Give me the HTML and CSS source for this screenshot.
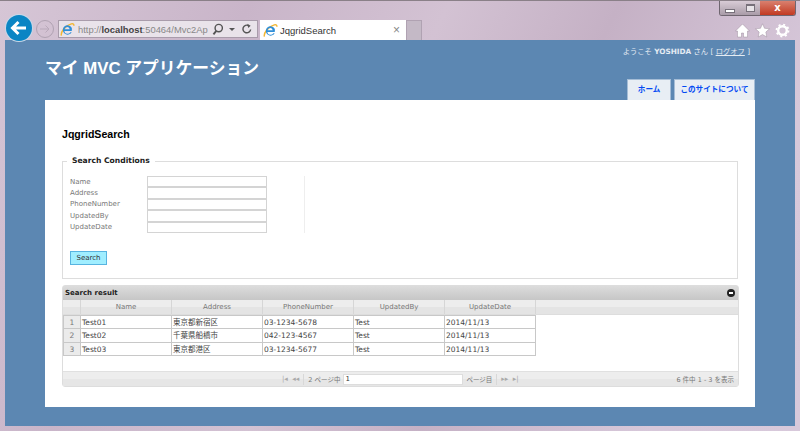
FILE: index.html
```html
<!DOCTYPE html>
<html lang="ja">
<head>
    <meta charset="UTF-8">
    <title>JqgridSearch</title>
    <link rel="stylesheet" href="styles.css">
</head>
<body>
    <svg class="defs" width="0" height="0">
        <symbol id="ie" viewBox="0 0 16 16">
            <path d="M1.5 14.5C.5 11 5 4 12 2c2-.6 3.2.2 2.6 2" fill="none" stroke="#f2b632" stroke-width="1.5"/>
            <path d="M12.5 9.6H4.6a3.4 3.4 0 0 0 6.4 1.2h1.5a5 5 0 1 1 0-4.6c.3.9.2 2.3 0 3.4zM4.8 7.6h5.6a2.9 2.9 0 0 0-5.6 0z" fill="#2f8fd8" fill-rule="evenodd"/>
        </symbol>
    </svg>

    <!-- Browserfenster -->
    <div class="window">
        <div class="window-controls">
            <span class="control"><span class="min-icon"></span></span>
            <span class="control"><span class="max-icon"></span></span>
            <span class="control close">x</span>
        </div>

        <div class="chrome">
            <div class="back-btn">
                <svg width="18" height="16" viewBox="0 0 18 16"><path d="M16 8H3M8.500 2 2.500 8l6 6" fill="none" stroke="#fff" stroke-width="3"/></svg>
            </div>
            <div class="forward-btn">
                <svg width="12" height="10" viewBox="0 0 12 10"><path d="M1 5h9M6.500 1.500 10 5 6.500 8.500" fill="none" stroke="#b9a9ba" stroke-width="1"/></svg>
            </div>
            <div class="address-bar">
                <svg class="ie-icon" width="15" height="15"><use href="#ie"/></svg>
                <span class="url">http://<b>localhost</b>:50464/Mvc2Ap</span>
                <svg width="12" height="13" viewBox="0 0 12 13"><circle cx="7" cy="5" r="3.800" fill="none" stroke="#555" stroke-width="1.500"/><path d="M4.500 8 1.500 11.500" stroke="#555" stroke-width="2"/></svg>
                <span class="arrow-down"></span>
                <svg width="12" height="12" viewBox="0 0 12 12"><path d="M10 6.500A4 4 0 1 1 8 2.500" fill="none" stroke="#555" stroke-width="1.500"/><path d="M6.500 .5 10 2.500 7.500 5z" fill="#555"/></svg>
            </div>
            <div class="tab">
                <svg class="ie-icon" width="15" height="15"><use href="#ie"/></svg>
                <span class="tab-title">JqgridSearch</span>
                <span class="tab-close">×</span>
            </div>
            <div class="new-tab"></div>
            <div class="toolbar">
                <svg width="15" height="15" viewBox="0 0 15 15"><path d="M7.500 1 .5 8h2v6h4V10h2v4h4V8h2z" fill="#fff" stroke="#8d7f8d" stroke-width=".4"/></svg>
                <svg width="15" height="15" viewBox="0 0 15 15"><path d="m7.500 .8 2 4.500 5 .5-3.700 3.300 1 4.900-4.300-2.500-4.300 2.500 1-4.900L.5 5.800l5-.5z" fill="#fff" stroke="#8d7f8d" stroke-width=".4"/></svg>
                <svg width="15" height="15" viewBox="0 0 15 15"><circle cx="7.500" cy="7.500" r="4.300" fill="none" stroke="#fff" stroke-width="2.400"/><circle cx="7.500" cy="7.500" r="6" fill="none" stroke="#fff" stroke-width="1.800" stroke-dasharray="2 2.700"/></svg>
            </div>
        </div>

        <!-- Seite -->
        <div class="page">
            <header class="page-header">
                <h1>マイ MVC アプリケーション</h1>
                <div class="header-right">
                    <div class="login">ようこそ <b>YOSHIDA</b> さん [ <a href="#">ログオフ</a> ]</div>
                    <nav class="menu">
                        <a href="#">ホーム</a>
                        <a href="#">このサイトについて</a>
                    </nav>
                </div>
            </header>

            <main class="main">
                <h2>JqgridSearch</h2>

                <fieldset class="conditions">
                    <legend>Search Conditions</legend>
                    <div class="form-rows">
                        <div class="form-row"><label>Name</label><input type="text"></div>
                        <div class="form-row"><label>Address</label><input type="text"></div>
                        <div class="form-row"><label>PhoneNumber</label><input type="text"></div>
                        <div class="form-row"><label>UpdatedBy</label><input type="text"></div>
                        <div class="form-row"><label>UpdateDate</label><input type="text"></div>
                    </div>
                    <button class="search-button">Search</button>
                </fieldset>

                <div class="grid">
                    <div class="grid-title">
                        <span>Search result</span>
                        <span class="collapse"></span>
                    </div>
                    <div class="grid-head">
                        <div class="rn"></div>
                        <div>Name</div>
                        <div>Address</div>
                        <div>PhoneNumber</div>
                        <div>UpdatedBy</div>
                        <div>UpdateDate</div>
                    </div>
                    <div class="grid-body">
                        <div class="grid-row">
                            <div class="rn">1</div><div>Test01</div><div>東京都新宿区</div><div>03-1234-5678</div><div>Test</div><div>2014/11/13</div>
                        </div>
                        <div class="grid-row">
                            <div class="rn">2</div><div>Test02</div><div>千葉県船橋市</div><div>042-123-4567</div><div>Test</div><div>2014/11/13</div>
                        </div>
                        <div class="grid-row">
                            <div class="rn">3</div><div>Test03</div><div>東京都港区</div><div>03-1234-5677</div><div>Test</div><div>2014/11/13</div>
                        </div>
                    </div>
                    <div class="pager">
                        <div class="pager-center">
                            <span class="pager-arrows">|◂ &nbsp;◂◂</span>
                            <span class="pager-sep"></span>
                            <span>2 ページ中</span>
                            <input type="text" value="1">
                            <span>ページ目</span>
                            <span class="pager-sep"></span>
                            <span class="pager-arrows">▸▸ &nbsp;▸|</span>
                        </div>
                        <div class="pager-info">6 件中 1 - 3 を表示</div>
                    </div>
                </div>
            </main>
        </div>
    </div>
</body>
</html>
```

FILE: styles.css
```css
/* Grundlayout */
html, body {
    margin: 0;
    padding: 0;
}

body {
    width: 800px;
    height: 431px;
    overflow: hidden;
    font-family: "DejaVu Sans", "Noto Sans CJK JP", sans-serif;
}

.defs {
    position: absolute;
}

/* Browserfenster */
.window {
    position: relative;
    box-sizing: border-box;
    width: 800px;
    height: 431px;
    padding: 0 5px 5px;
    background: linear-gradient(115deg, #d6c6d6 0%, #c9b5c9 25%, #d3c2d3 45%, #c5b1c5 62%, #d7c8da 85%, #d8c9db 100%);
    border-top: 1px solid #8a8088;
}

.window-controls {
    position: absolute;
    top: 0;
    right: 4px;
    display: flex;
    width: 75px;
    height: 14px;
    border: 1px solid #6f6670;
    border-top: none;
    border-radius: 0 0 3px 3px;
    overflow: hidden;
}

.control {
    flex: 1;
    display: flex;
    align-items: center;
    justify-content: center;
    background: linear-gradient(#d8ccd6, #a99ca8);
}

.control.close {
    flex: 0 0 35px;
    background: linear-gradient(#d9806f, #c23a22);
    color: #fff;
    font-size: 10px;
    font-weight: bold;
    line-height: 1;
}

.min-icon {
    width: 8px;
    height: 2px;
    margin-top: 5px;
    background: #fff;
    border: 1px solid #77707a;
}

.max-icon {
    width: 7px;
    height: 5px;
    border: 1px solid #77707a;
    border-top-width: 2px;
    background: #e8e4e8;
}

.chrome {
    display: flex;
    align-items: flex-start;
    height: 39px;
    padding-top: 19px;
    box-sizing: border-box;
}

.back-btn {
    position: relative;
    z-index: 2;
    flex: none;
    display: flex;
    align-items: center;
    justify-content: center;
    width: 26px;
    height: 26px;
    margin: -5px 0 0 1px;
    border-radius: 50%;
    background: #0b85c4;
    box-shadow: 0 0 0 1px #c8d8e8;
}

.forward-btn {
    flex: none;
    display: flex;
    align-items: center;
    justify-content: center;
    box-sizing: border-box;
    width: 18px;
    height: 18px;
    margin: 0 4px 0 4px;
    border: 1px solid #b0a2b2;
    border-radius: 50%;
}

.address-bar {
    flex: none;
    display: flex;
    align-items: center;
    box-sizing: border-box;
    width: 200px;
    height: 18px;
    padding: 0 4px 0 1px;
    background: #e9e3ea;
    border: 1px solid #a99cab;
    font-size: 9px;
    color: #888;
}

.ie-icon {
    flex: none;
}

.url {
    width: 135px;
    margin: 0 4px 0 3px;
    overflow: hidden;
    white-space: nowrap;
    font-family: "Liberation Sans", sans-serif;
    font-size: 9.400px;
}

.url b {
    color: #444;
}

.arrow-down {
    width: 0;
    height: 0;
    margin: 0 6px 0 6px;
    border: 3px solid transparent;
    border-top: 3px solid #555;
    border-bottom: none;
}

.tab {
    flex: none;
    display: flex;
    align-items: center;
    box-sizing: border-box;
    width: 146px;
    height: 20px;
    margin-left: 2px;
    padding: 0 6px 0 3px;
    background: #fff;
    font-family: "Liberation Sans", sans-serif;
    font-size: 9.500px;
    color: #333;
}

.tab-title {
    flex: 1;
    margin-left: 2px;
}

.tab-close {
    font-size: 12px;
    color: #888;
}

.new-tab {
    flex: none;
    width: 16px;
    height: 20px;
    background: #c4b9c6;
    border: 1px solid #b0a2b2;
    border-bottom: none;
    box-sizing: border-box;
}

.toolbar {
    display: flex;
    gap: 5px;
    margin: 3px 5px 0 auto;
}

/* Seite */
.page {
    height: 386px;
    background: #5c87b2;
}

.page-header {
    display: flex;
    justify-content: space-between;
    align-items: flex-start;
    height: 60px;
    padding: 0 40px;
}

.page-header h1 {
    margin: 18px 0 0;
    font-family: "Liberation Sans", "Noto Sans CJK JP", sans-serif;
    font-size: 16.800px;
    font-weight: bold;
    line-height: 21px;
    color: #fff;
    white-space: nowrap;
}

.header-right {
    display: flex;
    flex-direction: column;
    align-items: flex-end;
}

.login {
    margin: 7px 5px 0 0;
    font-size: 7.300px;
    line-height: 10px;
    color: #e4ebf2;
    white-space: nowrap;
}

.login a {
    color: #e4ebf2;
}

.menu {
    display: flex;
    gap: 3px;
    margin-top: 22px;
}

.menu a {
    box-sizing: border-box;
    height: 21px;
    padding: 0 5.500px;
    background: #e8eef4;
    border: 1px solid #a5bdd6;
    border-bottom: none;
    font-size: 7.600px;
    font-weight: bold;
    line-height: 20px;
    color: #034af3;
    text-decoration: none;
}

.menu a:first-child {
    padding: 0 9.500px;
}

/* Hauptbereich */
.main {
    box-sizing: border-box;
    height: 307px;
    margin: 0 40px;
    padding: 27px 17px 0;
    background: #fff;
}

.main h2 {
    margin: 0 0 15px;
    font-family: "Liberation Sans", sans-serif;
    font-size: 10.600px;
    font-weight: bold;
    line-height: 14px;
    color: #000;
}

/* Suchformular */
.conditions {
    box-sizing: border-box;
    width: 676px;
    height: 123px;
    margin: 0;
    padding: 7px 7px 0;
    border: 1px solid #ddd;
}

.conditions legend {
    margin: 0 0 3px -3px;
    padding: 0 5px;
    font-size: 7.600px;
    font-weight: bold;
    line-height: 10px;
    color: #222;
}

.form-rows {
    box-sizing: border-box;
    width: 235px;
    border-right: 1px solid #eee;
}

.form-row {
    display: flex;
    align-items: center;
    height: 11.400px;
}

.form-row label {
    width: 77px;
    font-size: 7px;
    color: #777;
}

.form-row input {
    box-sizing: border-box;
    width: 120px;
    height: 11.400px;
    padding: 0;
    border: 1px solid #d4d4d4;
}

.search-button {
    display: block;
    box-sizing: border-box;
    width: 37px;
    height: 14px;
    margin-top: 18px;
    padding: 0;
    background: #a0eeff;
    border: 1px solid #58b4e0;
    font-family: inherit;
    font-size: 7px;
    color: #333;
}

/* Ergebnisliste */
.grid {
    box-sizing: border-box;
    width: 677px;
    height: 102px;
    margin-top: 6px;
    background: #fff;
    border: 1px solid #ddd;
    border-radius: 3px;
    font-size: 7.500px;
}

.grid-title {
    display: flex;
    justify-content: space-between;
    align-items: center;
    height: 14px;
    padding: 0 3px 0 2px;
    background: linear-gradient(#dcdcdc, #c6c6c6);
    font-weight: bold;
    font-size: 7px;
    color: #222;
}

.collapse {
    width: 8px;
    height: 8px;
    border-radius: 50%;
    background: #222;
    position: relative;
}

.collapse::after {
    content: '';
    position: absolute;
    left: 2px;
    top: 3px;
    width: 4px;
    height: 2px;
    background: #fff;
}

.grid-head {
    display: flex;
    height: 15px;
    background: linear-gradient(#ededed 50%, #e4e4e4 50%);
    border-bottom: 1px solid #ddd;
    box-sizing: border-box;
    color: #777;
    font-size: 7px;
    line-height: 14px;
    text-align: center;
}

.grid-head div {
    box-sizing: border-box;
    width: 91px;
    border-right: 1px solid #d6d6d6;
}

.grid-head div.rn,
.grid-row div.rn {
    width: 18px;
}

.grid-body {
    height: 56px;
}

.grid-row {
    display: flex;
    width: 473px;
    height: 13.500px;
    box-sizing: border-box;
    border-bottom: 1px solid #c8c8c8;
    color: #444;
    line-height: 13px;
}

.grid-row:first-child {
    height: 14px;
    border-top: 1px solid #c8c8c8;
}

.grid-row div {
    box-sizing: border-box;
    width: 91px;
    padding-left: 1px;
    border-right: 1px solid #c8c8c8;
    white-space: nowrap;
}

.grid-row div.rn {
    padding: 0;
    background: #ebebeb;
    border-left: 1px solid #c8c8c8;
    color: #777;
    text-align: center;
}

.pager {
    position: relative;
    display: flex;
    justify-content: flex-end;
    align-items: center;
    height: 15px;
    padding-right: 4px;
    background: linear-gradient(#ededed 50%, #e6e6e6 50%);
    border-top: 1px solid #e0e0e0;
    box-sizing: border-box;
    font-size: 6.500px;
    color: #777;
}

/* Pager-Mitte liegt unabhängig von der Info rechts */
.pager-center {
    position: absolute;
    left: 219px;
    display: flex;
    align-items: center;
    gap: 3px;
}

.pager-arrows {
    font-size: 7px;
    color: #aaa;
}

.pager-sep {
    width: 1px;
    height: 11px;
    margin: 0 1px;
    background: #d8d8d8;
}

.pager-center input {
    box-sizing: border-box;
    width: 120px;
    height: 11px;
    padding: 0 1px;
    border: 1px solid #ddd;
    font-family: inherit;
    font-size: 7px;
    color: #333;
}
```
